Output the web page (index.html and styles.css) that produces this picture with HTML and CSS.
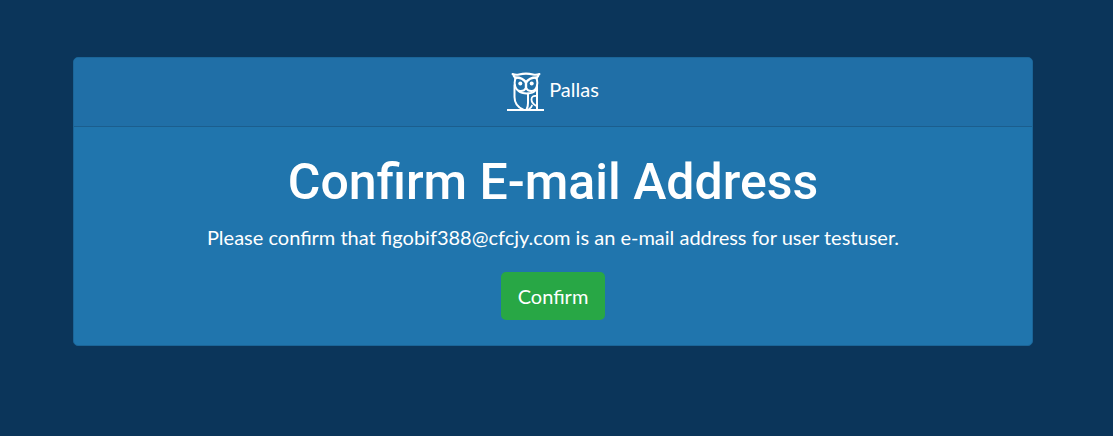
FILE: index.html
```html
<!DOCTYPE html>
<html lang="en">
<head>
<meta charset="utf-8">
<meta name="viewport" content="width=device-width, initial-scale=1">
<title>Pallas</title>
<link rel="stylesheet" href="styles.css">
</head>
<body>
<main class="page">
  <section class="card">
    <header class="card-header">
      <svg class="logo" viewBox="0 0 38 40" fill="none" stroke="currentColor" stroke-width="1.8" stroke-linecap="round" stroke-linejoin="round" aria-hidden="true">
        <path d="M0 38h37" stroke-width="2" stroke-linecap="butt"/>
        <path d="M5.500 2C8 3 10 3 12 2.500c4-1 10-1 14 0c2 .5 4 .5 6.500-.5M6 2c.5 2.500 1.500 3.500 3 4.500M32 2c-.5 2.500-1.500 3.500-3 4.500" stroke-width="2"/>
        <path d="M8.500 5.500c4 0 8 1 10.500 5c2.500-4 6.500-5 10.500-5" stroke-width="2.400"/>
        <path d="M8.300 6c-1.500 6-.3 12.500 5 13c2.500.2 4.500-1 5.700-3c1.200 2 3.200 3.200 5.700 3c5.300-.5 6.500-7 5-13" stroke-width="2"/>
        <path d="M19 11v5" stroke-width="2.400"/>
        <path d="M7.500 13v12c0 5.500 3 10 8.500 12.500" stroke-width="2"/>
        <path d="M30 14v23.500" stroke-width="2"/>
        <path d="M11.500 19c3 2.500 6 2.700 9.500 2.500v9.500c0 3-.5 5-1.500 6.500" stroke-width="2"/>
        <path d="M21 21.500c3 0 5.500-.8 7.500-3"/>
        <path d="M29.500 24c-3.500-.5-5 1-5 3.500c0 3 2.300 5 5 6.500"/>
        <path d="M22 37c1.500-.8 2.500-2 3-3.500"/>
        <circle cx="13.300" cy="11.600" r="2" fill="currentColor" stroke="none"/>
        <circle cx="24.700" cy="11.600" r="2" fill="currentColor" stroke="none"/>
      </svg>
      <span>Pallas</span>
    </header>
    <form class="card-body">
      <h1 class="title">Confirm E-mail Address</h1>
      <p class="message">Please confirm that figobif388@cfcjy.com is an e-mail address for user testuser.</p>
      <button class="confirm" type="submit">Confirm</button>
    </form>
  </section>
</main>
</body>
</html>
```
FILE: styles.css
```css
* {
  box-sizing: border-box;
}

body {
  margin: 0;
  background: #0b355a;
  color: #fff;
  font-family: Lato, "Liberation Sans", sans-serif;
  font-size: 20px;
  line-height: 30px;
}

.page {
  padding: 57px 80px 57px 73px;
}

.card {
  background: #2075ad;
  border: 1px solid #1b6598;
  border-radius: 5px;
}

.card-header {
  display: flex;
  align-items: center;
  justify-content: center;
  gap: 4px;
  padding: 14px 20px;
  background: #206fa7;
  border-bottom: 1px solid #1b5e8e;
  border-radius: 4px 4px 0 0;
}

.logo {
  width: 38px;
  height: 40px;
}

.card-header span {
  padding-bottom: 6px;
}

.card-body {
  display: flex;
  flex-direction: column;
  align-items: center;
  padding: 25px 20px;
  text-align: center;
}

.title {
  margin: 0 0 10px;
  font-family: Roboto, "Liberation Sans", sans-serif;
  font-size: 50px;
  font-weight: 500;
  line-height: 60px;
}

.message {
  margin: 0 0 20px;
}

.confirm {
  padding: 9px 17px;
  border: 0;
  border-radius: 5px;
  background: #28a745;
  color: inherit;
  font: inherit;
  cursor: pointer;
}
```
